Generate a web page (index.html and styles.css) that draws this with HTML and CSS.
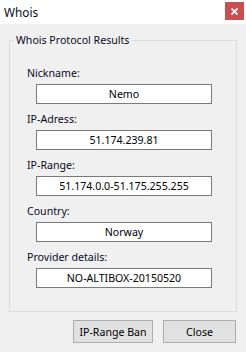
FILE: index.html
```html
<!DOCTYPE html>
<html lang="en">
<head>
<meta charset="utf-8">
<title>Whois</title>
<link rel="stylesheet" href="styles.css">
</head>
<body>
<div class="window">
  <div class="titlebar">
    <span class="title">Whois</span>
    <button class="close" aria-label="Close">
      <svg width="7" height="7" viewBox="0 0 7 7"><path d="M0.5 0.5 L6.5 6.5 M6.5 0.5 L0.5 6.5" stroke="#fff" stroke-width="1.6" fill="none"/></svg>
    </button>
  </div>
  <div class="content">
    <fieldset class="group">
      <legend class="group-title">Whois Protocol Results</legend>
      <div class="fields">
        <div class="field"><span class="label">Nickname:</span><div class="box">Nemo</div></div>
        <div class="field"><span class="label">IP-Adress:</span><div class="box">51.174.239.81</div></div>
        <div class="field"><span class="label">IP-Range:</span><div class="box">51.174.0.0-51.175.255.255</div></div>
        <div class="field"><span class="label">Country:</span><div class="box">Norway</div></div>
        <div class="field"><span class="label">Provider details:</span><div class="box">NO-ALTIBOX-20150520</div></div>
      </div>
    </fieldset>
    <div class="actions">
      <button class="btn btn-wide">IP-Range Ban</button>
      <button class="btn">Close</button>
    </div>
  </div>
</div>
</body>
</html>
```
FILE: styles.css
```css
* { box-sizing: border-box; }
html, body { margin: 0; padding: 0; }
body {
  width: 246px;
  height: 352px;
  overflow: hidden;
  font-family: "Noto Sans", "Open Sans", sans-serif;
  font-size: 10.6px;
  color: #000;
}
.window {
  width: 246px;
  height: 352px;
  display: flex;
  flex-direction: column;
  background: #f0f0f0;
}
.titlebar {
  height: 24px;
  background: #fff;
  display: flex;
  align-items: flex-start;
  justify-content: space-between;
}
.title {
  font-size: 11.8px;
  line-height: 16px;
  margin: 4px 0 0 4px;
  color: #0a0a1e;
}
.close {
  width: 19px;
  height: 18px;
  margin: 2px 2px 0 0;
  padding: 0;
  border: 0;
  background: #c75050;
  display: flex;
  align-items: center;
  justify-content: center;
}
.content {
  flex: 1;
  display: flex;
  flex-direction: column;
}
.group {
  margin: 8px 0 0 9px;
  width: 228px;
  padding: 0;
  border: 1px solid #dcdcdc;
  min-width: 0;
}
.group-title {
  margin-left: 4px;
  padding: 0 2px;
  line-height: 16px;
  font-size: 10.6px;
  color: #0a0a1e;
}
.fields {
  display: flex;
  flex-direction: column;
  gap: 7px;
  padding: 17px 0 23px 17px;
}
.field {
  display: flex;
  flex-direction: column;
  gap: 3px;
}
.label {
  line-height: 16px;
  color: #0a0a1e;
}
.box {
  margin-left: 9px;
  width: 176px;
  height: 20px;
  background: #fff;
  border: 1px solid #7a7a7a;
  display: flex;
  align-items: center;
  justify-content: center;
  line-height: 16px;
  color: #000;
}
.actions {
  display: flex;
  justify-content: flex-end;
  gap: 10px;
  margin-top: 8px;
  padding-right: 10px;
}
.btn {
  width: 73px;
  height: 23px;
  padding: 0;
  background: #e1e1e1;
  border: 1px solid #adadad;
  font-family: inherit;
  font-size: 10.6px;
  color: #000;
}
.btn-wide { width: 80px; }
```
